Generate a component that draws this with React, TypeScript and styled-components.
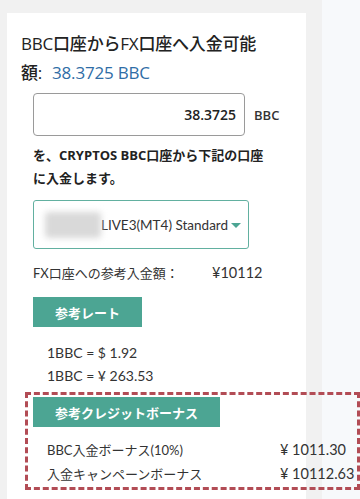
import React from 'react';
import styled, { createGlobalStyle } from 'styled-components';

const GlobalStyle = createGlobalStyle`
  html, body {
    margin: 0;
    padding: 0;
    background: #f1f1f1;
  }
  body {
    font-family: Lato, "Noto Sans CJK JP", sans-serif;
    color: #333;
    overflow: hidden;
  }
`;

const Page = styled.div`
  display: flex;
  width: 360px;
  height: 499px;
  background: #f1f1f1;
`;

const Card = styled.div`
  width: 299px;
  margin: 13px 0 0 7px;
  background: #fff;
  padding: 16px 0 0 14px;
  box-sizing: border-box;
  flex-shrink: 0;
  position: relative;
  z-index: 1;
`;

const Gutter = styled.div`
  width: 16px;
  flex-shrink: 0;
`;

const SidePanel = styled.div`
  flex: 1;
  background: #f7f9fb;
`;

const Title = styled.h2`
  margin: 0;
  font-family: "Open Sans", "Noto Sans CJK JP", sans-serif;
  font-size: 17px;
  line-height: 29px;
  font-weight: 500;
  color: #222;
  letter-spacing: -0.2px;
`;

const TitleLine = styled.div`
  display: flex;
  gap: 10px;
`;

const Amount = styled.span`
  color: #2f6da6;
  font-weight: 400;
`;

const Body = styled.div`
  padding-left: 12px;
`;

const InputRow = styled.div`
  display: flex;
  align-items: center;
  margin-top: 6px;
  gap: 9px;
`;

const AmountInput = styled.div`
  width: 212px;
  height: 43px;
  box-sizing: border-box;
  border: 1px solid #9a9a9a;
  border-radius: 4px;
  display: flex;
  align-items: center;
  justify-content: flex-end;
  padding-right: 8px;
  font-family: "Open Sans", sans-serif;
  font-weight: 600;
  font-size: 14px;
  color: #222;
`;

const Unit = styled.span`
  font-family: "Open Sans", sans-serif;
  font-weight: 600;
  font-size: 13px;
  color: #333;
`;

const Notice = styled.p`
  margin: 8px 0 0;
  font-family: "Open Sans", "Noto Sans CJK JP", sans-serif;
  font-weight: 700;
  font-size: 13px;
  line-height: 23px;
  color: #222;
  width: 240px;
`;

const Select = styled.div`
  margin-top: 10px;
  width: 216px;
  height: 49px;
  box-sizing: border-box;
  border: 1px solid #62b0a0;
  border-radius: 3px;
  display: flex;
  align-items: center;
  padding-left: 11px;
  font-family: Lato, "Noto Sans CJK JP", sans-serif;
  font-size: 13.5px;
  color: #333;
`;

const Blurred = styled.span`
  width: 56px;
  height: 26px;
  background: #d9d9d9;
  filter: blur(3px);
  border-radius: 3px;
  flex-shrink: 0;
`;

const Caret = styled.span`
  width: 0;
  height: 0;
  border-left: 5px solid transparent;
  border-right: 5px solid transparent;
  border-top: 5px solid #4ca593;
  margin-left: 3px;
  margin-top: 2px;
`;

const InfoLine = styled.div`
  margin-top: 14px;
  display: flex;
  align-items: baseline;
  font-size: 13px;
  line-height: 20px;
  color: #333;
`;

const InfoLabel = styled.span`
  width: 179px;
`;

const InfoValue = styled.span`
  font-size: 14.5px;
`;

const TealButton = styled.div<{ $width: number }>`
  width: ${(p) => p.$width}px;
  height: 30px;
  background: #4ca593;
  color: #fff;
  font-family: "Noto Sans CJK JP", sans-serif;
  font-weight: 700;
  font-size: 13px;
  display: flex;
  align-items: center;
  padding-left: 22px;
  box-sizing: border-box;
  margin-top: 14px;
`;

const RateList = styled.div`
  margin-top: 14px;
  padding-left: 14px;
  font-size: 14px;
  line-height: 23px;
  color: #333;
`;

const BonusBox = styled.div`
  margin: 5px 0 0 -8px;
  width: 335px;
  box-sizing: border-box;
  border: 3px dashed #b24c55;
  padding: 2px 0 1px 5px;

  ${TealButton} {
    margin-top: 0;
    padding-left: 22px;
  }
`;

const BonusList = styled.div`
  margin-top: 11px;
  padding-left: 14px;
  font-family: Lato, "Noto Sans CJK JP", sans-serif;
  font-size: 13px;
  line-height: 24px;
  color: #333;
`;

const BonusRow = styled.div`
  display: flex;
  align-items: baseline;
  white-space: nowrap;
`;

const BonusLabel = styled.span`
  width: 233px;
  flex-shrink: 0;
`;

const BonusValue = styled.span`
  font-size: 14.5px;
`;

export default function App() {
  return (
    <>
      <GlobalStyle />
      <Page>
        <Card>
          <Title>
            <TitleLine>BBC口座からFX口座へ入金可能</TitleLine>
            <TitleLine>
              <span>額:</span>
              <Amount>38.3725 BBC</Amount>
            </TitleLine>
          </Title>
          <Body>
            <InputRow>
              <AmountInput>38.3725</AmountInput>
              <Unit>BBC</Unit>
            </InputRow>
            <Notice>を、CRYPTOS BBC口座から下記の口座に入金します。</Notice>
            <Select>
              <Blurred />
              LIVE3(MT4) Standard
              <Caret />
            </Select>
            <InfoLine>
              <InfoLabel>FX口座への参考入金額：</InfoLabel>
              <InfoValue>¥10112</InfoValue>
            </InfoLine>
            <TealButton $width={109}>参考レート</TealButton>
            <RateList>
              <div>1BBC = $ 1.92</div>
              <div>1BBC = ¥ 263.53</div>
            </RateList>
            <BonusBox>
              <TealButton $width={187}>参考クレジットボーナス</TealButton>
              <BonusList>
                <BonusRow>
                  <BonusLabel>BBC入金ボーナス(10%)</BonusLabel>
                  <BonusValue>¥ 1011.30</BonusValue>
                </BonusRow>
                <BonusRow>
                  <BonusLabel>入金キャンペーンボーナス</BonusLabel>
                  <BonusValue>¥ 10112.63</BonusValue>
                </BonusRow>
              </BonusList>
            </BonusBox>
          </Body>
        </Card>
        <Gutter />
        <SidePanel />
      </Page>
    </>
  );
}
